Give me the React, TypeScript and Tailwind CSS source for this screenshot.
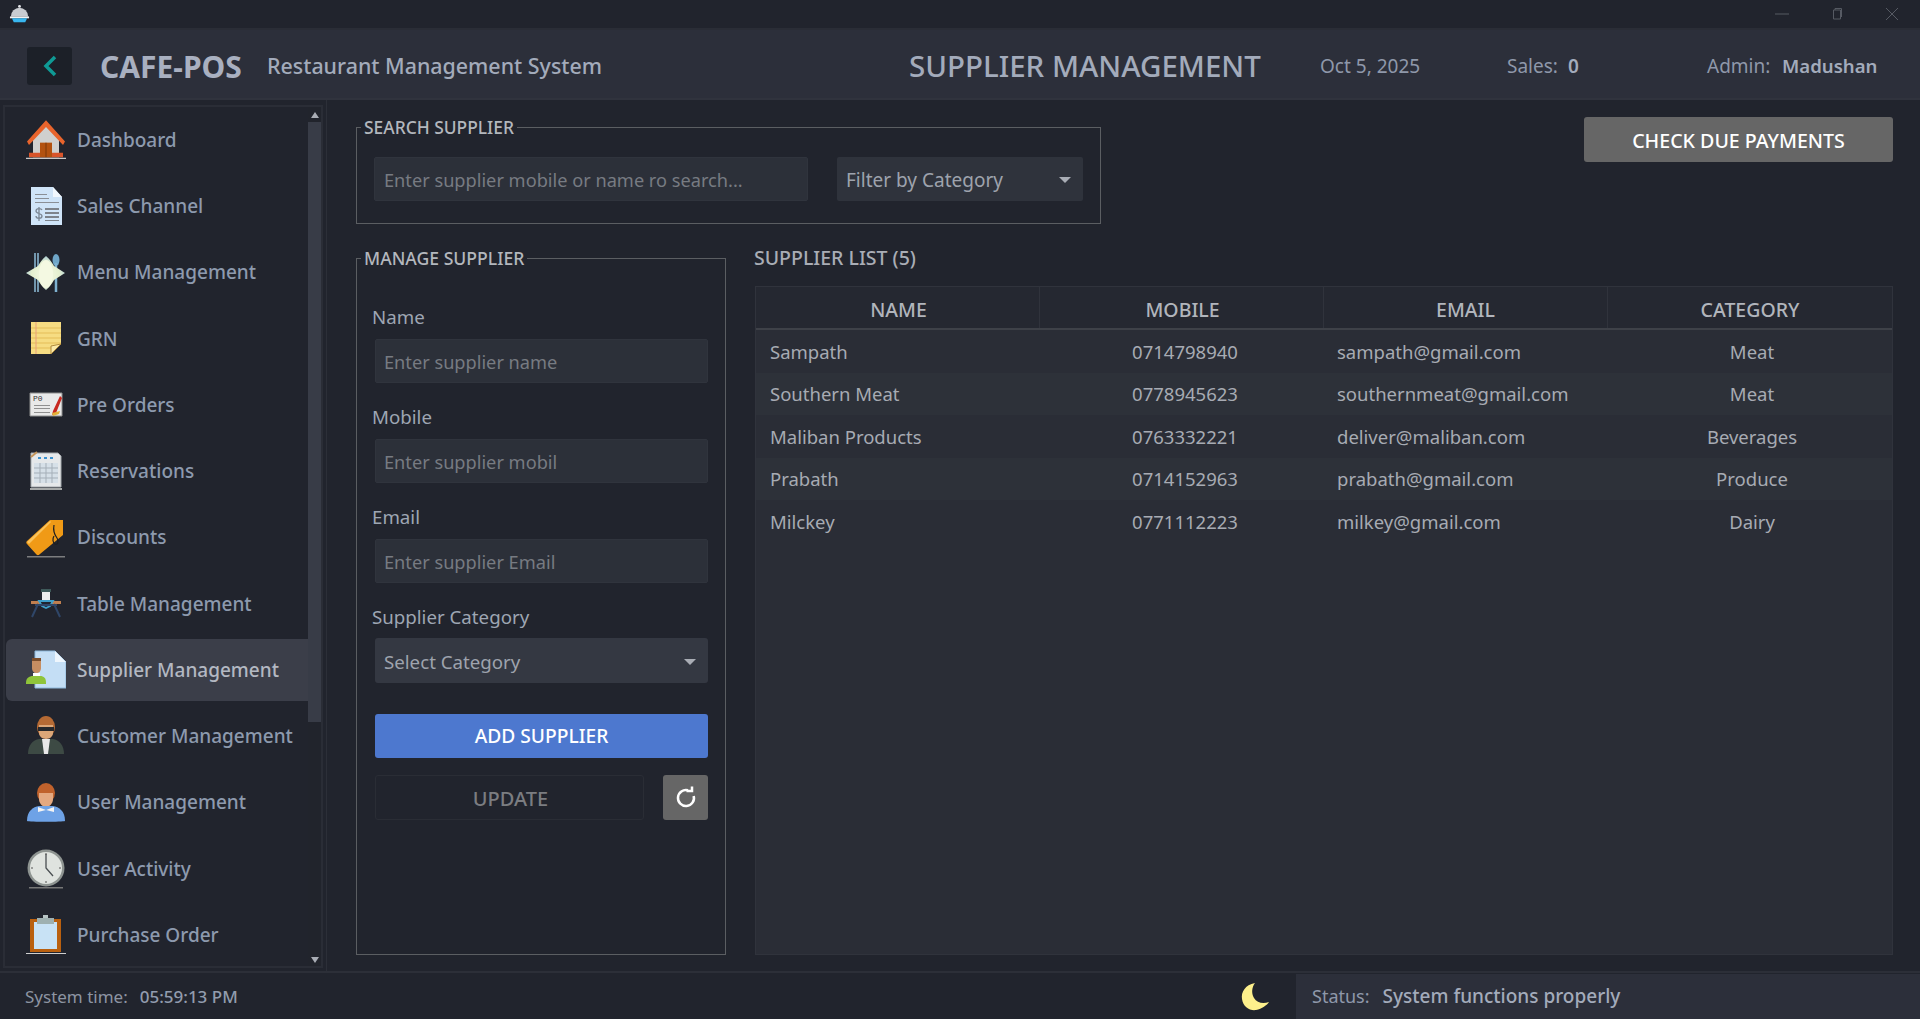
import type { ReactNode } from "react";

const FONT = "font-['Noto_Sans',sans-serif]";

const suppliers = [
  { name: "Sampath", mobile: "0714798940", email: "sampath@gmail.com", category: "Meat" },
  { name: "Southern Meat", mobile: "0778945623", email: "southernmeat@gmail.com", category: "Meat" },
  { name: "Maliban Products", mobile: "0763332221", email: "deliver@maliban.com", category: "Beverages" },
  { name: "Prabath", mobile: "0714152963", email: "prabath@gmail.com", category: "Produce" },
  { name: "Milckey", mobile: "0771112223", email: "milkey@gmail.com", category: "Dairy" },
];

function Svg({ children }: { children: ReactNode }) {
  return (
    <svg viewBox="0 0 40 40" className="w-10 h-10 shrink-0">
      {children}
    </svg>
  );
}

function HomeIcon() {
  return (
    <Svg>
      <g transform="translate(0 -2) scale(1 1.120)">
        <path d="M7 17 20 5l13 12v18H7z" fill="#d0d0ce" />
        <path d="M1 21 20 2l19 19-2 3L20 8 3 24z" fill="#e8642c" />
        <path d="M3 31h34v4H3z" fill="#d9552b" />
        <path d="M14 22h12v13H14z" fill="#b3520f" />
        <path d="M19.500 22h1v13h-1z" fill="#7a3608" />
        <path d="M0 35.500h40v1H0z" fill="#c9c9c9" />
      </g>
    </Svg>
  );
}

function SalesIcon() {
  return (
    <Svg>
      <path d="M5 1h22l9 10v28H5z" fill="#cfe4f8" />
      <path d="M27 1l9 10h-9z" fill="#f2f8fe" />
      <path d="M9 8h12v1H9zM9 12h14v1H9zM9 16h24v1H9z" fill="#8a8f96" />
      <path d="M19 22h14v2H19zM19 26h14v2H19zM19 30h14v2H19zM19 34h14v1H19z" fill="#7d838b" />
      <path d="M13 21v14M16 24c-1-2-6-2-6 1s6 2 6 5-6 3-6 0" fill="none" stroke="#7b8794" strokeWidth="1.300" />
    </Svg>
  );
}

function MenuIcon() {
  return (
    <Svg>
      <defs>
        <radialGradient id="plate" cx="50%" cy="55%" r="60%">
          <stop offset="0%" stopColor="#f8fbe6" />
          <stop offset="60%" stopColor="#e4efcf" />
          <stop offset="100%" stopColor="#9cc3d4" />
        </radialGradient>
      </defs>
      <path d="M9 0v39M12 0v39" stroke="#8dbcd8" strokeWidth="1.500" />
      <ellipse cx="30" cy="7" rx="3.500" ry="6" fill="#6fa6c8" />
      <path d="M30 10v29" stroke="#7fb2d1" strokeWidth="2.500" />
      <path d="M20 3c4 3 6 7 8 10l11 7-11 7c-2 3-4 7-8 10-4-3-6-7-8-10L0 20l12-7c2-3 4-7 8-10z" fill="url(#plate)" />
      <ellipse cx="20" cy="21" rx="7" ry="14" fill="#f4f9e2" />
    </Svg>
  );
}

function GrnIcon() {
  return (
    <Svg>
      <path d="M5 3h30v22L25 35H5z" fill="#f6dc82" />
      <path d="M5 9h30M5 14h30M5 19h30M5 24h30M5 29h20" stroke="#e4bd58" strokeWidth="1" />
      <path d="M10 3v32" stroke="#e8a07a" strokeWidth="1" />
      <path d="M35 25 25 35v-8z" fill="#fbeaa8" stroke="#b08a3c" strokeWidth="1" />
    </Svg>
  );
}

function PreOrderIcon() {
  return (
    <Svg>
      <path d="M4 8h32v23H4z" fill="#e9e9e9" stroke="#8f8f8f" strokeWidth="1" />
      <path d="M8 20h16v1H8zM8 23h16v1H8zM8 27h16v1H8z" fill="#8f8f8f" />
      <path d="M27 26l7-15 2 2-6 15-4 2z" fill="#c7281f" />
      <path d="M26 28l8-2-1 3-6 2z" fill="#e2b23a" />
      <text x="7" y="16" fontSize="8" fontFamily="Liberation Mono" fill="#333">P0</text>
    </Svg>
  );
}

function ReservationIcon() {
  return (
    <Svg>
      <path d="M5 2h27l3 3v31H5z" fill="#e5e8ea" stroke="#a4a9ad" strokeWidth="1" />
      <path d="M12 6h3v2h-3zM18 6h3v2h-3zM24 6h3v2h-3z" fill="#3b91cf" />
      <path d="M8 12h24v20H8z" fill="#d6e0e8" />
      <path d="M8 17h24M8 22h24M8 27h24M14 12v20M20 12v20M26 12v20" stroke="#a5afb8" strokeWidth="1" />
      <path d="M4 37h32v2H4z" fill="#a5a8a8" />
      <path d="M5 6l6-5" stroke="#c4945a" strokeWidth="2" />
    </Svg>
  );
}

function DiscountIcon() {
  return (
    <Svg>
      <path d="M1 23 24 2h13v15L14 36c-2 2-3 1-4 0L1 26c-1-1-1-2 0-3z" fill="#f09a16" />
      <path d="M1 24 24 3l1 1L3 26z" fill="#fac35c" />
      <path d="M28 7c-1 5 0 9 3 13 2 3 1 7-2 6-2-1-3-5-1-8" fill="none" stroke="#1b1d22" strokeWidth="1.200" />
      <path d="M1 38h38v1.500H1z" fill="#7c7d7f" />
    </Svg>
  );
}

function TableIcon() {
  return (
    <Svg>
      <path d="M15 5h10v3H15z" fill="#3f5a5a" />
      <path d="M16 8h8v9h-8z" fill="#ececec" />
      <path d="M5 17h10v3H5zM25 17h10v3H25z" fill="#c07f4f" />
      <path d="M13 17h14l-3 5-4 2-4-2z" fill="none" stroke="#3f9fc9" strokeWidth="1.800" />
      <path d="M12 20 6 33M28 20l6 13M9 21h22" stroke="#2f4668" strokeWidth="2" fill="none" />
    </Svg>
  );
}

function SupplierIcon() {
  return (
    <Svg>
      <path d="M9 1h20l11 11v26H9z" fill="#c4def5" stroke="#8db8dc" strokeWidth="1" />
      <path d="M29 1l11 11H29z" fill="#eef6fd" />
      <path d="M6 9h9v9c0 3-2 5-4.500 5S6 21 6 18z" fill="#c78e62" />
      <path d="M6 8h9v3H6z" fill="#7c4e2c" />
      <path d="M7 23h7v5H7z" fill="#fff" />
      <path d="M0 33c0-5 3-7 7-7h7c4 0 6 2 6 7v1H0z" fill="#8fc43a" />
    </Svg>
  );
}

function CustomerIcon() {
  return (
    <Svg>
      <ellipse cx="20" cy="11" rx="9" ry="11" fill="#b56a34" />
      <path d="M13 9h14v8c0 3-3 6-7 6s-7-3-7-6z" fill="#dba678" />
      <path d="M12 11h16v4h-16z" fill="#26282c" />
      <path d="M2 38c0-9 5-14 11-15h14c6 1 11 6 11 15z" fill="#3d4a44" />
      <path d="M16 23h8l-2 15h-4z" fill="#e8e8e8" />
    </Svg>
  );
}

function UserIcon() {
  return (
    <Svg>
      <ellipse cx="20" cy="10" rx="9" ry="10" fill="#c0622c" />
      <path d="M13 10h14v6c0 4-3 8-7 8s-7-4-7-8z" fill="#e4a981" />
      <path d="M1 38c0-10 6-14 12-15h14c6 1 12 5 12 15-2 1-36 1-38 0z" fill="#6ea2e6" />
      <path d="M12 24l8 3 8-3v5l-8-2-8 2z" fill="#f4f4f4" />
    </Svg>
  );
}

function ClockIcon() {
  return (
    <Svg>
      <path d="M3 38h34v1.500H3z" fill="#777" />
      <circle cx="20" cy="19" r="18.500" fill="#8e9491" />
      <circle cx="20" cy="19" r="16" fill="#dfe3df" />
      <path d="M20 5v14l7 8" fill="none" stroke="#4a4f52" strokeWidth="1.300" />
      <path d="M20 4v2M20 32v2M5 19h2M33 19h2" stroke="#555" strokeWidth="1" />
    </Svg>
  );
}

function ClipboardIcon() {
  return (
    <Svg>
      <path d="M4 4h31v33H4z" fill="#b9600f" />
      <path d="M8 7h23v27H8z" fill="#c8e2f5" />
      <path d="M11 3h17v6H11z" fill="#9eb0b0" />
      <path d="M17 0h5v3h-5z" fill="#b7c4c4" />
      <path d="M0 38h40v1H0z" fill="#cfcfcf" />
    </Svg>
  );
}

const NAV: { label: string; icon: ReactNode; active?: boolean }[] = [
  { label: "Dashboard", icon: <HomeIcon /> },
  { label: "Sales Channel", icon: <SalesIcon /> },
  { label: "Menu Management", icon: <MenuIcon /> },
  { label: "GRN", icon: <GrnIcon /> },
  { label: "Pre Orders", icon: <PreOrderIcon /> },
  { label: "Reservations", icon: <ReservationIcon /> },
  { label: "Discounts", icon: <DiscountIcon /> },
  { label: "Table Management", icon: <TableIcon /> },
  { label: "Supplier Management", icon: <SupplierIcon />, active: true },
  { label: "Customer Management", icon: <CustomerIcon /> },
  { label: "User Management", icon: <UserIcon /> },
  { label: "User Activity", icon: <ClockIcon /> },
  { label: "Purchase Order", icon: <ClipboardIcon /> },
];

function Caret() {
  return <span className="w-0 h-0 border-x-[6px] border-x-transparent border-t-[6px] border-t-[#a9adb5]" />;
}

function TextBox({ placeholder, className }: { placeholder: string; className: string }) {
  return (
    <input
      placeholder={placeholder}
      className={`h-[44px] bg-[#2c3039] border border-[#30343d] rounded-[2px] px-[8px] pt-[2px] text-[18.200px] outline-none placeholder:text-[#777b82] ${className}`}
    />
  );
}

function Field({ label, placeholder }: { label: string; placeholder: string }) {
  return (
    <div className="flex flex-col">
      <label className="text-[18.700px] leading-[26px] text-[#9ea6b3] pl-[7px] mb-[9px]">{label}</label>
      <TextBox placeholder={placeholder} className="ml-[10px] w-[333px]" />
    </div>
  );
}

function Sidebar() {
  return (
    <aside className="w-[327px] h-full shrink-0 flex border-r border-[#2c2f38] pl-[3px] pt-[5px] pb-[3px] pr-[3px]">
      <div className="flex-1 flex border-2 border-[#2a2d36] min-w-0">
        <nav className="flex-1 flex flex-col min-w-0 pt-[2px] pl-[1px]">
          {NAV.map((item) => (
            <div
              key={item.label}
              className={`h-[62px] mb-[4.250px] shrink-0 flex items-center gap-[11px] pl-[20px] rounded-l-[6px] text-[19px] font-medium ${
                item.active ? "bg-[#3b3e49] text-[#b3b8c2]" : "text-[#8d9aae]"
              }`}
            >
              {item.icon}
              <span className="whitespace-nowrap">{item.label}</span>
            </div>
          ))}
        </nav>
        <div className="w-[13px] shrink-0 flex flex-col items-center justify-between pb-[3px] bg-[#21242c]">
          <div className="flex-1 w-full flex flex-col">
            <div className="h-[15px] flex items-center justify-center">
              <span className="w-0 h-0 border-x-[4px] border-x-transparent border-b-[6px] border-b-[#a9adb5]" />
            </div>
            <div className="h-[600px] bg-[#383c47]" />
          </div>
          <span className="w-0 h-0 border-x-[4px] border-x-transparent border-t-[6px] border-t-[#a9adb5]" />
        </div>
      </div>
    </aside>
  );
}

function SupplierTable() {
  return (
    <div className="flex-1 bg-[#2a2d36] border border-[#30333c] text-[18.500px] text-[#a7abb3]">
      <div className="h-[43px] grid grid-cols-4 bg-[#252831] border-b-2 border-[#3e4148] text-[19.500px] font-medium text-[#b1b5bc]">
        {["NAME", "MOBILE", "EMAIL", "CATEGORY"].map((col, i) => (
          <div
            key={col}
            className={`flex items-center justify-center pt-[4px] border-r border-[#30333c] last:border-r-0 ${i < 2 ? "pl-[2px]" : ""}`}
          >
            {col}
          </div>
        ))}
      </div>
      {suppliers.map((s, i) => (
        <div
          key={s.mobile}
          className={`h-[42.500px] grid grid-cols-4 items-center pt-[1px] ${i % 2 === 1 ? "bg-[#2d3139]" : ""}`}
        >
          <div className="pl-[14px]">{s.name}</div>
          <div className="text-center pl-[6px]">{s.mobile}</div>
          <div className="pl-[13px]">{s.email}</div>
          <div className="text-center pl-[4px]">{s.category}</div>
        </div>
      ))}
    </div>
  );
}

export default function App() {
  return (
    <div className={`${FONT} h-[1019px] w-[1920px] overflow-hidden flex flex-col bg-[#21242d]`}>
      {/* title bar */}
      <div className="h-[30px] shrink-0 flex items-center justify-between border-b-2 border-[#2a2d36] pl-[9px] pr-[21px]">
        <svg viewBox="0 0 22 22" className="w-[21px] h-[21px]">
          <circle cx="11" cy="2.500" r="1.500" fill="#e5e7eb" />
          <path d="M2 13a9 9 0 0 1 18 0z" fill="#c9ccd1" />
          <path d="M1 13h20v2H1z" fill="#f2f2f2" />
          <path d="M3 15h16l-2 4H5z" fill="#38b6ee" />
        </svg>
        <div className="flex items-center gap-[41px] text-[#565a63]">
          <svg viewBox="0 0 14 14" className="w-[14px] h-[14px]"><path d="M0 7h14" stroke="currentColor" /></svg>
          <svg viewBox="0 0 14 14" className="w-[14px] h-[14px]"><path d="M3.500 3h7v9h-7zM5 3V1.500h6.500V10" fill="none" stroke="currentColor" /></svg>
          <svg viewBox="0 0 14 14" className="w-[14px] h-[14px]"><path d="M1 1l12 12M13 1 1 13" stroke="currentColor" /></svg>
        </div>
      </div>

      {/* header */}
      <header className="h-[70px] shrink-0 flex items-center bg-[#2c2f3a] border-b-2 border-[#30333d] pl-[27px] pt-[4px] text-[#a3abbb]">
        <button className="w-[45px] h-[38px] shrink-0 rounded-[3px] bg-[#1c2028] flex items-center justify-center">
          <svg viewBox="0 0 18 24" className="w-[18px] h-[24px]">
            <path d="M14 3 5 12l9 9" fill="none" stroke="#0f9a95" strokeWidth="3.500" />
          </svg>
        </button>
        <span className="ml-[28px] shrink-0 text-[30px] font-bold text-[#a9b0c0] w-[167px]">CAFE-POS</span>
        <span className="shrink-0 text-[21.400px] font-medium w-[642px]">Restaurant Management System</span>
        <span className="shrink-0 text-[29.500px] font-medium w-[411px] whitespace-nowrap">SUPPLIER MANAGEMENT</span>
        <span className="shrink-0 text-[19px] text-[#8f98aa] w-[187px]">Oct 5, 2025</span>
        <span className="shrink-0 text-[19px] text-[#8f98aa] w-[61px]">Sales:</span>
        <span className="shrink-0 text-[19px] font-semibold w-[139px]">0</span>
        <span className="shrink-0 text-[19px] text-[#8f98aa] w-[75px]">Admin:</span>
        <span className="shrink-0 text-[18.600px] font-semibold">Madushan</span>
      </header>

      {/* body */}
      <main className="flex-1 flex min-h-0">
        <Sidebar />
        <div className="flex-1 min-w-0 flex flex-col pl-[29px] pr-[27px] pt-[15px] pb-[16px]">
          <div className="h-[109px] shrink-0 flex justify-between">
            <fieldset className="w-[744px] h-[109px] border border-[#5b5e62] pl-[17px] pr-[17px]">
              <legend className="-ml-[13px] px-[3px] text-[17.400px] leading-[24px] font-medium text-[#b3b7bd]">SEARCH SUPPLIER</legend>
              <div className="flex gap-[29px] mt-[18px]">
                <TextBox placeholder="Enter supplier mobile or name ro search..." className="w-[434px] !px-[9px]" />
                <div className="w-[246px] h-[44px] rounded-[2px] bg-[#2f333c] flex items-center justify-between pl-[9px] pr-[12px] pt-[2px] text-[19px] text-[#9ea3ad]">
                  <span>Filter by Category</span>
                  <Caret />
                </div>
              </div>
            </fieldset>
            <button className="w-[309px] h-[45px] mt-[2px] pt-[2px] rounded-[3px] bg-[#666666] text-white text-[19.600px] font-medium">
              CHECK DUE PAYMENTS
            </button>
          </div>

          <div className="flex-1 min-h-0 flex gap-[29px] mt-[22px]">
            <fieldset className="w-[370px] border border-[#5b5e62] px-[8px]">
              <legend className="-ml-[4px] px-[3px] text-[17.600px] leading-[24px] font-medium text-[#b3b7bd]">MANAGE SUPPLIER</legend>
              <div className="flex flex-col gap-[21px] mt-[34px]">
                <Field label="Name" placeholder="Enter supplier name" />
                <Field label="Mobile" placeholder="Enter supplier mobil" />
                <Field label="Email" placeholder="Enter supplier Email" />
              </div>
              <label className="block text-[18.700px] leading-[26px] text-[#9ea6b3] pl-[7px] mt-[21px] mb-[8px]">Supplier Category</label>
              <div className="ml-[10px] w-[333px] h-[45px] rounded-[3px] bg-[#343842] flex items-center justify-between pl-[9px] pr-[12px] pt-[3px] text-[18.700px] text-[#9ea3ad]">
                <span>Select Category</span>
                <Caret />
              </div>
              <button className="ml-[10px] mt-[31px] w-[333px] h-[44px] pt-[1px] rounded-[3px] bg-[#4d78cf] text-white text-[19.200px] font-medium">
                ADD SUPPLIER
              </button>
              <div className="ml-[10px] mt-[17px] w-[333px] flex justify-between">
                <button className="w-[269px] h-[45px] rounded-[3px] border border-[#2a2d35] text-[#7b7d81] text-[20px] font-medium pl-[2px] pt-[3px]">
                  UPDATE
                </button>
                <button className="w-[45px] h-[45px] rounded-[3px] bg-[#666666] flex items-center justify-center">
                  <svg viewBox="0 0 24 24" className="w-[24px] h-[24px]">
                    <path d="M19.700 10A8 8 0 1 1 14 4.300" fill="none" stroke="#fff" strokeWidth="2.500" />
                    <path d="M12.500 5H18V0.500" fill="none" stroke="#fff" strokeWidth="2.500" />
                  </svg>
                </button>
              </div>
            </fieldset>

            <div className="flex-1 min-w-0 flex flex-col">
              <div className="h-[24px] mb-[16px] shrink-0 flex items-center text-[19.500px] font-medium text-[#a9adb5] -ml-px">SUPPLIER LIST (5)</div>
              <SupplierTable />
            </div>
          </div>
        </div>
      </main>

      {/* status bar */}
      <footer className="h-[48px] shrink-0 flex items-stretch border-t-2 border-[#2c2f38] pt-px">
        <div className="flex-1 flex items-center justify-between pl-[25px] pr-[26px] text-[#8d94a2]">
          <div className="flex items-center gap-[12px]">
            <span className="text-[17px]">System time:</span>
            <span className="font-medium text-[#929cae] text-[17px]">05:59:13 PM</span>
          </div>
          <svg viewBox="0 0 29 29" className="w-[29px] h-[29px]">
            <path d="M14 1C4 3 0 10 1 17c1 8 8 12 14 11 6-1 11-5 13-8-6 2-12 1-15-4-3-5-2-11 1-15z" fill="#fdf08c" />
          </svg>
        </div>
        <div className="w-[624px] bg-[#2c2f3a] flex items-center pl-[16px] gap-[13px]">
          <span className="text-[#8f98aa] text-[18px]">Status:</span>
          <span className="text-[#a3abbb] text-[19px] font-medium">System functions properly</span>
        </div>
      </footer>
    </div>
  );
}
